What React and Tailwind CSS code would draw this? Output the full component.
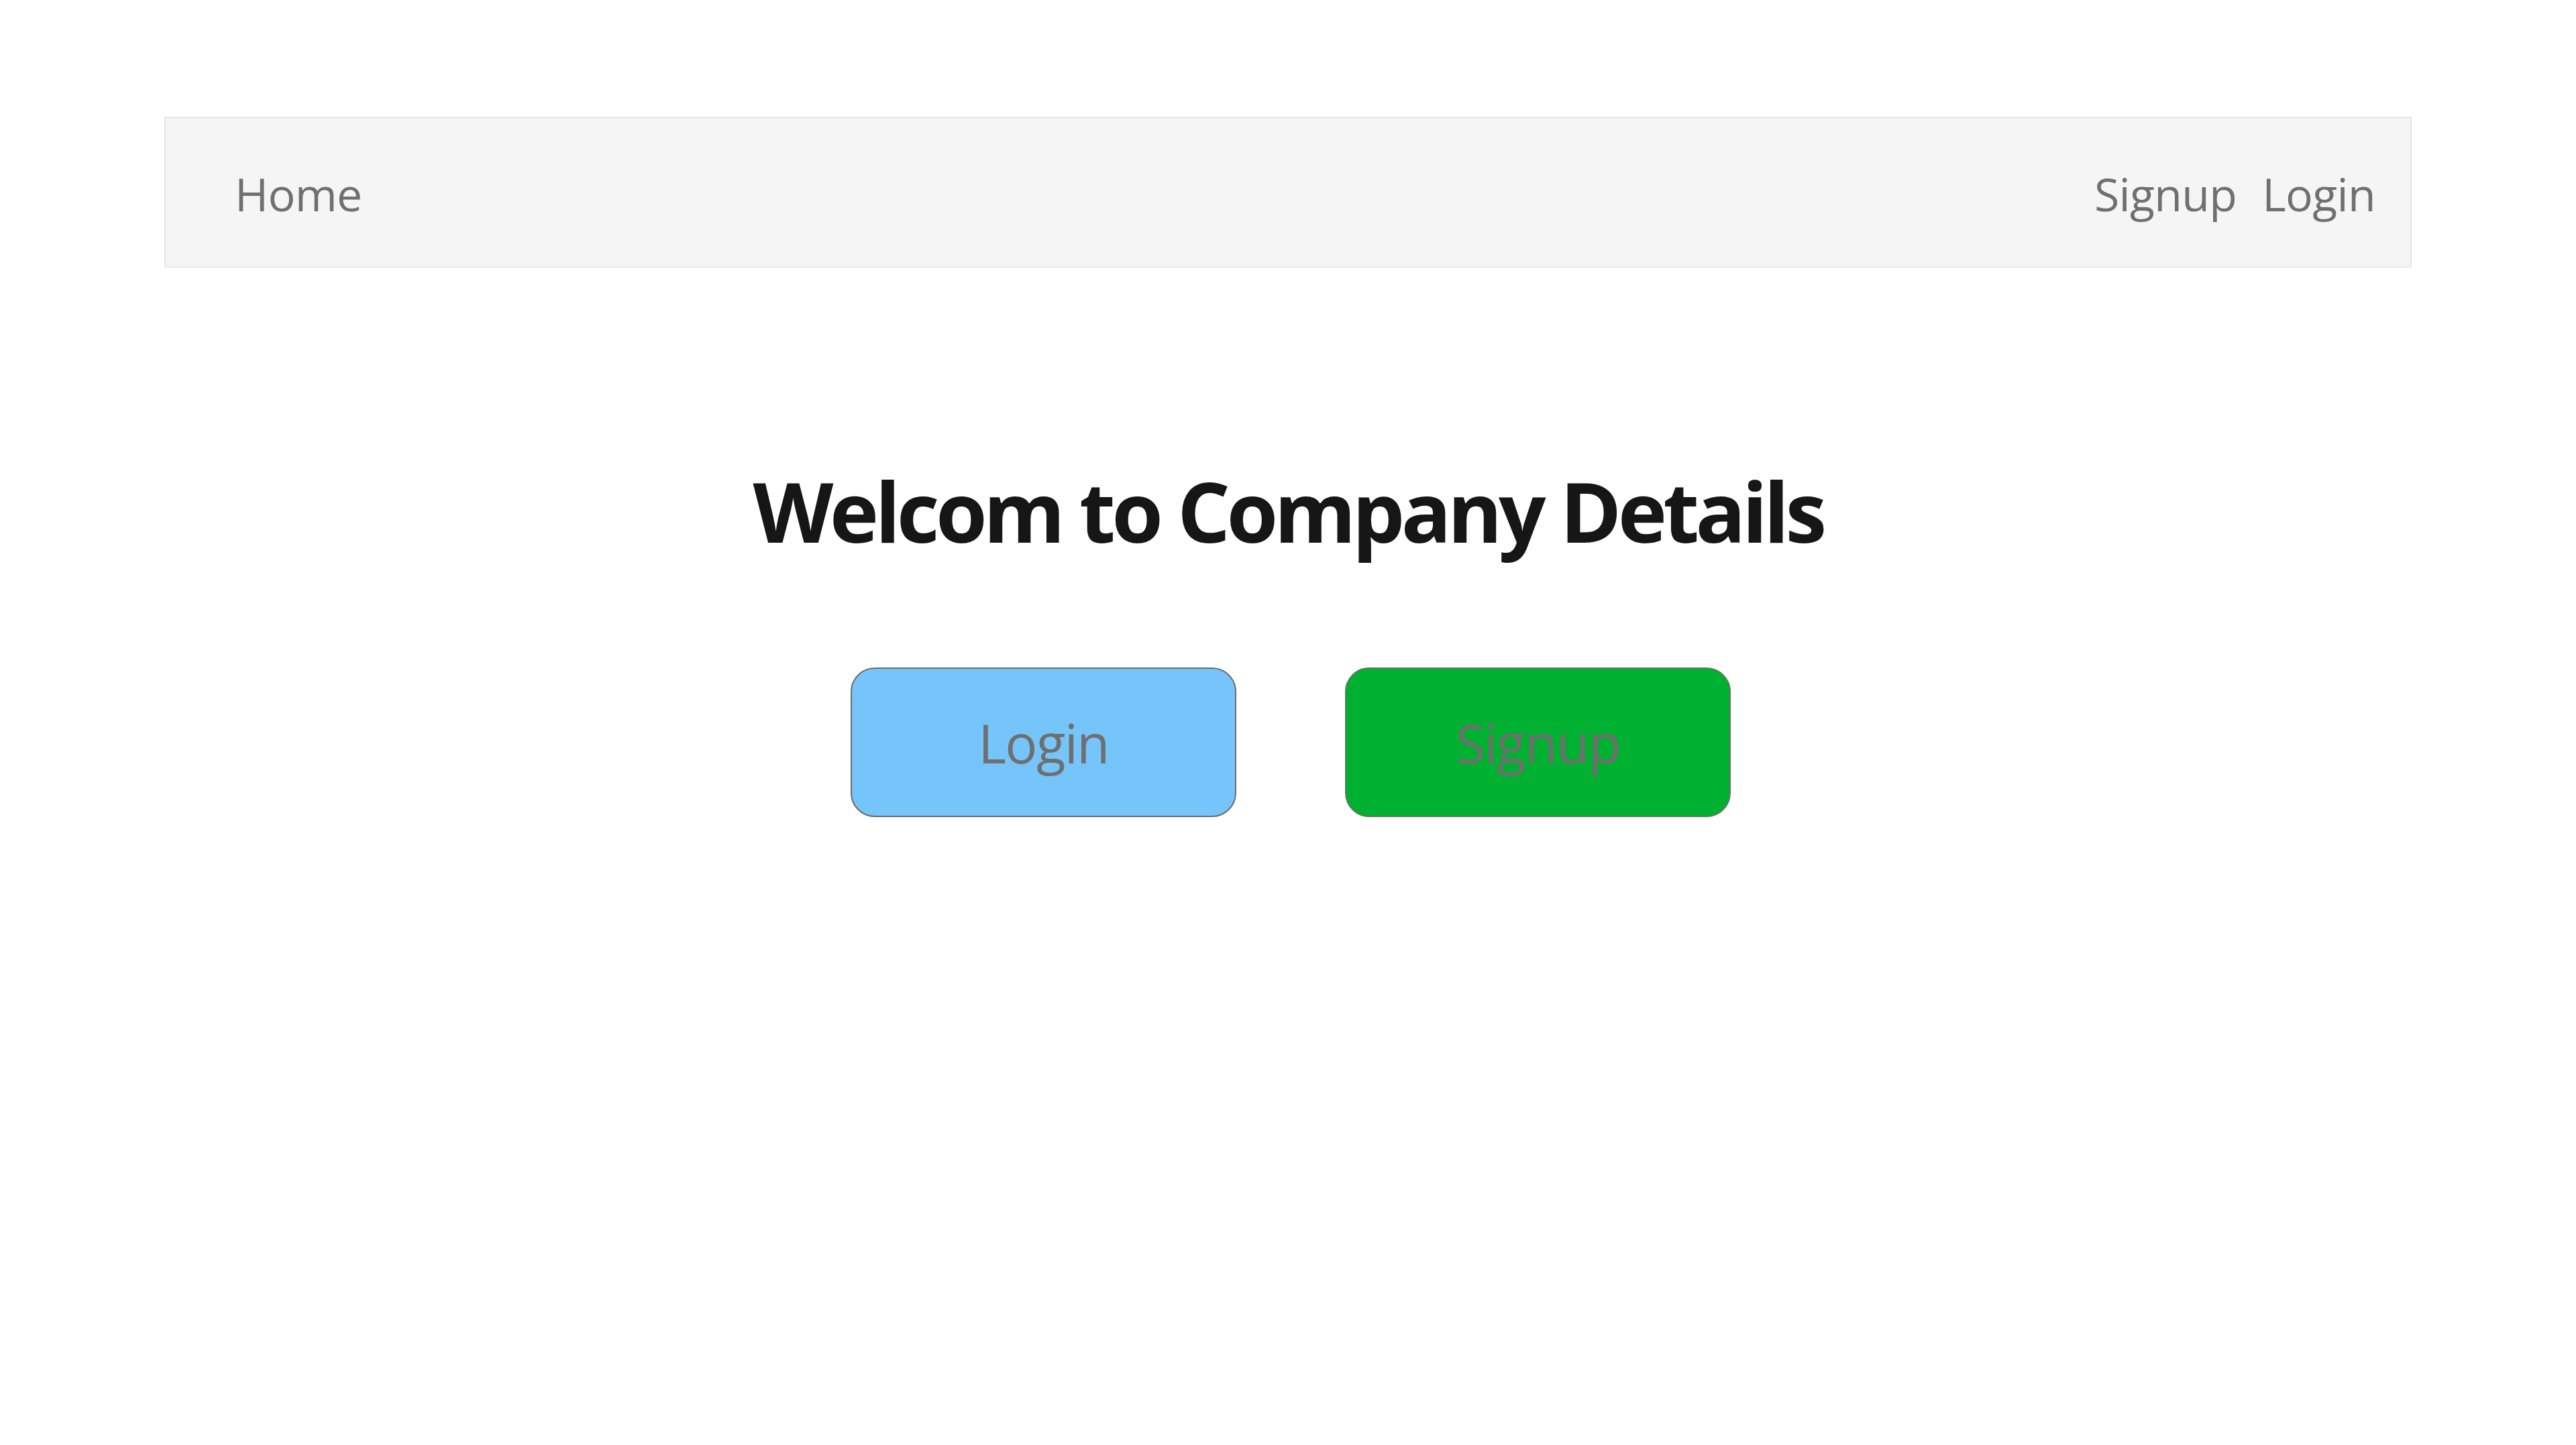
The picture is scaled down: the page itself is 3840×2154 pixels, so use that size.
export default function App() {
  return (
    <div className="min-h-screen bg-white font-['Open_Sans',sans-serif] px-[245px] pt-[174px]">
      {/* Top nav */}
      <nav className="h-[225px] flex items-center justify-between bg-[#f5f5f5] border-2 border-[#e5e5e5] pl-[103px] pr-[52px] pt-[4px] text-[68px] text-[#707070] tracking-[-0.01em]">
        <a href="#">Home</a>
        <div className="flex items-center gap-[38px]">
          <a href="#">Signup</a>
          <a href="#">Login</a>
        </div>
      </nav>

      <h1 className="mt-[300px] text-center text-[124px] leading-none font-bold text-[#161616] tracking-[-0.045em]">
        Welcom to Company Details
      </h1>

      <div className="mt-[172px] pl-[8px] flex justify-center gap-[162px]">
        <button className="w-[575px] h-[223px] flex items-center justify-center rounded-[36px] border-2 border-[#6b6b6b] bg-[#75c5fb] text-[80px] text-[#6f6f6f] tracking-[-0.02em]">
          Login
        </button>
        <button className="w-[575px] h-[223px] flex items-center justify-center rounded-[36px] border-2 border-[#5e7a5e] bg-[#00b131] text-[80px] text-[#6f6f6f] tracking-[-0.02em]">
          Signup
        </button>
      </div>
    </div>
  )
}
